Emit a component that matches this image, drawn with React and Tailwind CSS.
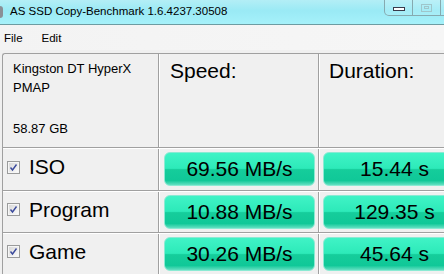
import React from 'react'

const rows = [
  { name: 'ISO', speed: '69.56 MB/s', time: '15.44 s' },
  { name: 'Program', speed: '10.88 MB/s', time: '129.35 s' },
  { name: 'Game', speed: '30.26 MB/s', time: '45.64 s' },
]

function CheckBox() {
  return (
    <svg width="13" height="13" viewBox="0 0 13 13" className="shrink-0">
      <defs>
        <linearGradient id="cb" x1="0" y1="0" x2="1" y2="1">
          <stop offset="0" stopColor="#d8d8d8" />
          <stop offset="1" stopColor="#fbfbfb" />
        </linearGradient>
      </defs>
      <rect x="0.5" y="0.5" width="12" height="12" fill="#f6f6f6" stroke="#9a9b9b" />
      <rect x="2" y="2" width="9" height="9" fill="url(#cb)" />
      <path d="M3.5 6.5 L5.5 9 L9.5 3.5" fill="none" stroke="#3b4a9c" strokeWidth="1.4" />
    </svg>
  )
}

function Bar({ text }) {
  return (
    <div className="h-[34px] rounded-[6px] border border-[#8aead3] bg-[linear-gradient(to_bottom,#40f3c6_0%,#2deab9_48%,#15cd9b_52%,#10c898_86%,#63e0c2_100%)] flex items-center justify-center text-[21px] text-black">
      {text}
    </div>
  )
}

export default function App() {
  return (
    <div className="w-[444px] h-[274px] overflow-hidden bg-[#f0f0f0] font-['Liberation_Sans',Arial,sans-serif] text-black">
      {/* title bar */}
      <div className="relative h-[25px] border-b border-[#6d9ca2] bg-[linear-gradient(to_bottom,#b3eef6_0%,#9aeaf5_45%,#a6f1fa_100%)] flex items-center">
        <div className="w-[3px] h-[12px] bg-[#8a8f96] rounded-r-sm" />
        <span className="ml-[7px] text-[11.5px] leading-none pb-[1px]">AS SSD Copy-Benchmark 1.6.4237.30508</span>
        <div className="absolute top-0 left-[384px] h-[16px] w-[70px] border border-t-0 border-[#86aab0] rounded-bl-[5px] flex bg-white/10">
          <div className="w-[28px] border-r border-[#86aab0] flex items-center justify-center">
            <div className="w-[12px] h-[4px] border border-[#3a3a4a] bg-white mt-[2px]" />
          </div>
          <div className="w-[28px] border-r border-[#86aab0] flex items-center justify-center">
            <div className="w-[11px] h-[8px] border border-[#9fc6cb] flex items-center justify-center">
              <div className="w-[5px] h-[3px] border border-[#9fc6cb]" />
            </div>
          </div>
        </div>
      </div>
      {/* menu bar */}
      <div className="h-[25px] bg-[linear-gradient(to_right,#f3f3f3,#f6f6f6)] flex items-center text-[11.5px] pt-[2px]">
        <span className="ml-[4px]">File</span>
        <span className="ml-[19px]">Edit</span>
      </div>
      <div className="h-[3px]" />
      {/* table */}
      <div className="ml-[2px] border-t border-l border-[#a0a0a0] rounded-tl-[3px]">
        <div className="flex h-[94px] border-b border-[#a0a0a0]">
          <div className="w-[156px] border-r border-[#a0a0a0] pl-[10px] pt-[7px] text-[13px] leading-[15px]">
            <div>Kingston DT HyperX</div>
            <div className="mt-[4px]">PMAP</div>
            <div className="mt-[26px]">58.87 GB</div>
          </div>
          <div className="w-[160px] border-r border-[#a0a0a0] border-l border-l-white pl-[10px] pt-[5px] text-[21px] leading-[24px]">
            Speed:
          </div>
          <div className="flex-1 border-l border-white pl-[9px] pt-[5px] text-[21px] leading-[24px]">
            Duration:
          </div>
        </div>
        {rows.map((r, i) => (
          <div key={r.name} className={`flex border-t border-white border-b border-b-[#a0a0a0] ${i === 0 ? 'h-[43px]' : 'h-[42px]'}`}>
            <div className="w-[156px] border-r border-[#a0a0a0] flex items-center pl-[4px] pb-[5px] gap-[9px]">
              <CheckBox />
              <span className="text-[21px] leading-[24px]">{r.name}</span>
            </div>
            <div className="w-[160px] border-r border-[#a0a0a0] border-l border-l-white pl-[4px] pr-[3px] pt-[3px]">
              <Bar text={r.speed} />
            </div>
            <div className="flex-1 border-l border-white pl-[3px] pt-[3px] -mr-[22px]">
              <Bar text={r.time} />
            </div>
          </div>
        ))}
      </div>
    </div>
  )
}
